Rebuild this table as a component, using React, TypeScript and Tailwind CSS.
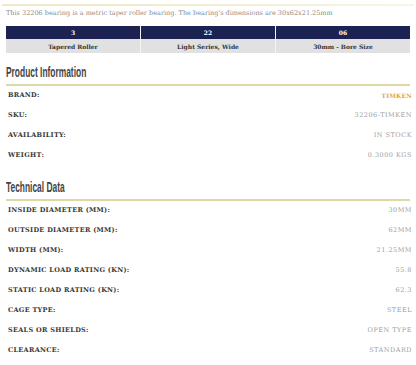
const specs = [
  { top: '3', bottom: 'Tapered Roller' },
  { top: '22', bottom: 'Light Series, Wide' },
  { top: '06', bottom: '30mm - Bore Size' },
];

const productInfo = [
  { label: 'BRAND:', value: 'TIMKEN', brand: true },
  { label: 'SKU:', value: '32206-TIMKEN' },
  { label: 'AVAILABILITY:', value: 'IN STOCK' },
  { label: 'WEIGHT:', value: '0.3000 KGS' },
];

const technicalData = [
  { label: 'INSIDE DIAMETER (MM):', value: '30MM' },
  { label: 'OUTSIDE DIAMETER (MM):', value: '62MM' },
  { label: 'WIDTH (MM):', value: '21.25MM' },
  { label: 'DYNAMIC LOAD RATING (KN):', value: '55.8' },
  { label: 'STATIC LOAD RATING (KN):', value: '62.3' },
  { label: 'CAGE TYPE:', value: 'STEEL' },
  { label: 'SEALS OR SHIELDS:', value: 'OPEN TYPE' },
  { label: 'CLEARANCE:', value: 'STANDARD' },
];

const serif = { fontFamily: '"DejaVu Serif", "Liberation Serif", serif' };

const SectionTitle = ({ title }: { title: string }) => (
  <div className="mx-[6px] border-b-2 border-[#dcd8a8] h-[21px] flex items-start">
    <h2
      className="inline-block origin-left scale-x-[0.6] text-[14px] leading-[14px] font-bold text-[#444] whitespace-nowrap"
      style={{ fontFamily: '"Liberation Sans", Arial, sans-serif' }}
    >
      {title}
    </h2>
  </div>
);

const Row = ({ label, value, brand }: { label: string; value: string; brand?: boolean }) => (
  <div className="flex items-start justify-between ml-[6px] mr-[4px] h-[20px] pt-[5px]" style={serif}>
    <span className="text-[6.5px] leading-[9px] font-bold tracking-[0.3px] text-[#383838] pl-[2px]">{label}</span>
    <span
      className={
        brand
          ? 'text-[6px] leading-[9px] font-bold tracking-[0.2px] text-[#e9a11f]'
          : 'text-[6.5px] leading-[9px] tracking-[0.5px] text-[#a0a0a0]'
      }
    >
      {value}
    </span>
  </div>
);

const App = () => {
  return (
    <div className="w-[416px] h-[365px] bg-white overflow-hidden">
      <div className="pt-[4px]">
        <div className="mx-[2px] h-[2px] bg-gradient-to-r from-[#efe9c8] via-[#f2edd2] to-[#f8f5e6]" />
        <p className="px-[6px] mt-[3px] text-[6.5px] leading-[9px] text-[#8a8a8a]" style={serif}>
          This 32206 bearing is a metric taper roller bearing. The bearing's dimensions are 30x62x21.25mm
        </p>
      </div>

      <div className="mx-[6px] mt-[8px] grid grid-cols-3 gap-x-[1px] bg-[#f4f4f4]" style={serif}>
        {specs.map((s) => (
          <div key={s.top} className="flex flex-col">
            <div className="h-[13px] bg-[#1c2352] flex items-center justify-center text-[6px] font-bold text-white">
              {s.top}
            </div>
            <div className="h-[14px] bg-[#e1e1e1] flex items-center justify-center text-[6px] font-bold text-[#333]">
              {s.bottom}
            </div>
          </div>
        ))}
      </div>

      <div className="mt-[12px]">
        <SectionTitle title="Product Information" />
        {productInfo.map((r) => (
          <Row key={r.label} {...r} />
        ))}
      </div>

      <div className="mt-[14px]">
        <SectionTitle title="Technical Data" />
        {technicalData.map((r) => (
          <Row key={r.label} {...r} />
        ))}
      </div>
    </div>
  );
};

export default App;
